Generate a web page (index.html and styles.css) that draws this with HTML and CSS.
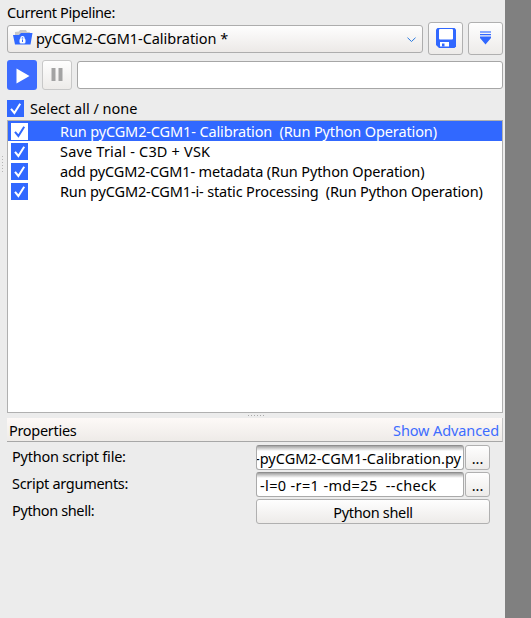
FILE: index.html
```html
<!DOCTYPE html>
<html lang="en">
<head>
<meta charset="utf-8">
<title>Pipeline</title>
<link rel="stylesheet" href="styles.css">
</head>
<body>
<svg width="0" height="0" class="defs"><symbol id="tick" viewBox="0 0 17 17"><path d="M4 8.8 7.4 13 13.2 3.8" fill="none" stroke="currentColor" stroke-width="2"/></symbol></svg>
<main class="panel">
  <div class="label"><span class="t-current">Current Pipeline:</span></div>
  <div class="pipeline">
    <div class="combo">
      <svg class="folder" width="20" height="15" viewBox="0 0 20 15"><path d="M2 6V2L6 1.5 7 0H13L14 2H16.500L18 4V9H2Z" fill="#c9c9c9"/><path d="M0 5H6L8 3H19.500L17.500 14.500H2Z" fill="#3168ff"/><path d="M8 9V8Q8 6.700 9.500 6.700T11 8V9" fill="none" stroke="#fff" stroke-width="1.300"/><rect x="6.500" y="8.500" width="6" height="5" rx="1.500" fill="#fff"/><path d="M9.500 9.500V12" stroke="#3168ff"/></svg>
      <span class="t-combo">pyCGM2-CGM1-Calibration *</span>
      <svg class="chevron" width="9" height="6" viewBox="0 0 9 6"><path d="M.5 .7 4.500 4.500 8.500 .7" fill="none" stroke="#2878df"/></svg>
    </div>
    <button class="btn tool" aria-label="Save"><svg width="20" height="20" viewBox="0 0 20 20"><path d="M1.500 0H18.500L20 1.500V18.500L18.500 20H3L0 17V1.500Z" fill="#3168ff"/><rect x="3" y="1" width="14" height="10.500" rx="1" fill="#fff"/><path d="M4 14H13V18.500H4Z" fill="#fff"/><path d="M6 15.500H8.500V18.500H6Z" fill="#3168ff"/></svg></button>
    <button class="btn tool" aria-label="Menu"><svg width="13" height="14" viewBox="0 0 13 14"><path d="M1 0H12V2H1Z" fill="#87a7ff"/><path d="M1 3H12V4.200H1ZM1 5.500H12V7L6.500 13.500 1 7Z" fill="#3168ff"/></svg></button>
  </div>
  <div class="run">
    <button class="play" aria-label="Run"><svg width="14" height="16" viewBox="0 0 14 16"><path d="M.5 .5 13.500 8 .5 15.500Z" fill="#fff"/></svg></button>
    <button class="btn pause" aria-label="Pause"><svg width="12" height="13" viewBox="0 0 12 13"><path d="M.5 0H4.500V13H.5ZM7.500 0H11.500V13H7.500Z" fill="#a3a3a3"/></svg></button>
    <div class="status"></div>
  </div>
  <div class="all"><svg class="check"><use href="#tick"/></svg><span class="t-all">Select all / none</span></div>
  <div class="list">
    <div class="item selected"><svg class="check"><use href="#tick"/></svg><span class="t-cal">Run pyCGM2-CGM1- Calibration&nbsp; (Run Python Operation)</span></div>
    <div class="item"><svg class="check"><use href="#tick"/></svg><span class="t-save">Save Trial - C3D + VSK</span></div>
    <div class="item"><svg class="check"><use href="#tick"/></svg><span class="t-meta">add pyCGM2-CGM1- metadata (Run Python Operation)</span></div>
    <div class="item"><svg class="check"><use href="#tick"/></svg><span class="t-static">Run pyCGM2-CGM1-i- static Processing&nbsp; (Run Python Operation)</span></div>
  </div>
  <div class="splitter"></div>
  <div class="header"><span class="t-prop">Properties</span><a class="t-adv">Show Advanced</a></div>
  <div class="props">
    <div class="prop"><span class="name t-file">Python script file:</span><div class="field end"><span class="t-path">-pyCGM2-CGM1-Calibration.py</span></div><button class="btn more">...</button></div>
    <div class="prop"><span class="name t-args">Script arguments:</span><div class="field"><span class="t-val">-l=0 -r=1 -md=25&nbsp; --check</span></div><button class="btn more">...</button></div>
    <div class="prop"><span class="name t-shell">Python shell:</span><button class="btn shell"><span class="t-btn">Python shell</span></button></div>
  </div>
  <div class="grip"></div>
</main>
</body>
</html>
```
FILE: styles.css
```css
* { box-sizing: border-box; }
body { margin: 0; height: 618px; background: #808080; overflow: hidden; font: 14.5px/20px "Noto Sans", "Open Sans", sans-serif; color: #000; }
.defs { position: absolute; }
svg { display: block; flex: none; }
span, a { white-space: pre; }
.panel { width: 505px; height: 618px; background: #ececec; padding: 2px 2px 0 7px; }
.label { height: 20px; }
.pipeline { display: flex; align-items: center; gap: 5px; height: 33px; }
.combo { width: 416px; height: 28px; display: flex; align-items: center; padding: 0 6px 0 5px; border: 1px solid #adadad; border-radius: 3px; background: linear-gradient(#fefefe, #ece9e7); }
.folder { margin: -2px 3px 0 0; }
.combo span { margin-top: -1px; }
.chevron { margin-left: auto; margin-top: 2px; }
.btn { display: flex; align-items: center; justify-content: center; padding: 0; border: 1px solid #b0b0b0; border-radius: 3px; background: linear-gradient(#fefefe, #edebe9); font: inherit; color: #000; }
.tool { width: 35px; height: 33px; }
.tool svg { margin-top: -1px; }
.run { display: flex; align-items: center; gap: 5px; margin-top: 5px; height: 30px; }
.play { width: 30px; height: 30px; padding: 1px 0 0 2px; border: 0; border-radius: 3px; background: #3d6cff; display: flex; align-items: center; justify-content: center; }
.pause { width: 30px; height: 30px; border-color: #c8c8c8; }
.pause svg { margin-top: -2px; }
.status { flex: 1; height: 28px; border: 1px solid #a6a6a6; border-radius: 3px; background: #fff; }
.all { display: flex; align-items: center; height: 18px; margin-top: 9px; }
.all span { margin-left: 6px; }
.check { width: 17px; height: 17px; background: #3168ff; color: #fff; }
.list { height: 293px; margin-top: 3px; border: 1px solid #b0b0b0; background: #fff; }
.item { display: flex; align-items: center; height: 20px; padding-left: 3px; }
.item span { margin-left: 32px; }
.selected { background: #3168ff; color: #fff; }
.selected .check { background: #fff; color: #3168ff; }
.splitter { width: 17px; height: 1px; margin: 2px auto 2px 241px; background: repeating-linear-gradient(90deg, #aaa 0 1px, transparent 1px 3px); }
.header { display: flex; align-items: center; justify-content: space-between; height: 24px; padding: 0 3px 0 2px; border-bottom: 1px solid #a7a7a7; border-right: 1px solid #c4c4c4; background: linear-gradient(#fdf9f7, #eeebe8); }
.header a { color: #3d6cff; }
.props { display: flex; flex-direction: column; gap: 2px; padding: 3px 13px 0 5px; }
.prop { display: flex; height: 25px; }
.name { width: 244px; line-height: 22px; }
.field { width: 208px; height: 25px; margin-right: 1px; padding: 2px 2px 0 3px; overflow: hidden; border: 1px solid #aaa; border-top-color: #8e8e8e; border-radius: 3px; background: linear-gradient(#a2a2a2, #fff 5px); }
.end { display: flex; justify-content: flex-end; }
.more { width: 25px; padding-top: 1px; }
.shell { width: 234px; padding-top: 1px; }
.grip { position: absolute; left: 2px; top: 156px; width: 1px; height: 17px; background: repeating-linear-gradient(#b5b5b5 0 1px, transparent 1px 3px); }

/* Per-label tracking */
.t-current { letter-spacing: -.36px; }
.t-combo { letter-spacing: -.04px; }
.t-cal { letter-spacing: -.13px; }
.t-save { letter-spacing: .19px; }
.t-meta { letter-spacing: -.12px; }
.t-static { letter-spacing: -.15px; }
.t-prop { letter-spacing: -.3px; }
.t-adv { letter-spacing: -.1px; }
.t-file { letter-spacing: -.22px; }
.t-args { letter-spacing: -.3px; }
.t-shell { letter-spacing: -.38px; }
.t-val { letter-spacing: .36px; }
.t-btn { letter-spacing: -.33px; }
```
